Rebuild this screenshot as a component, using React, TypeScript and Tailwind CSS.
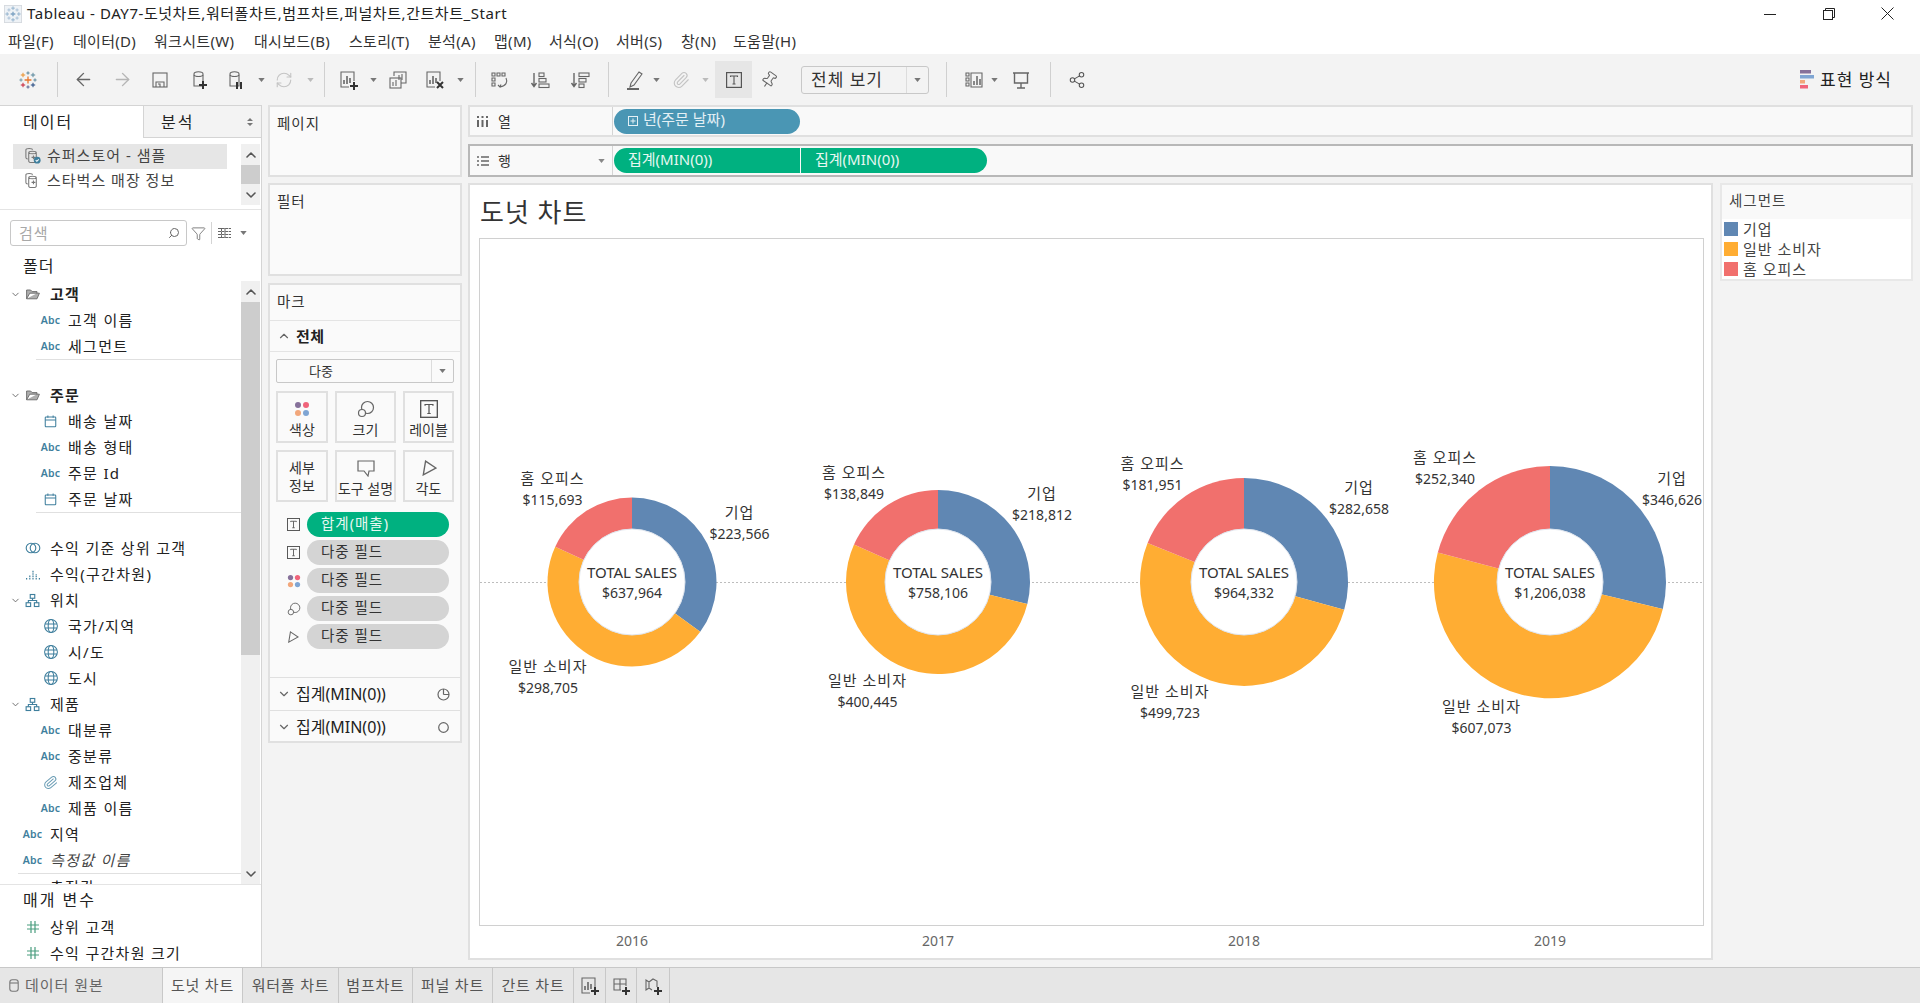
import React from "react";
import { ArrowLeft, ArrowRight, ChevronDown, ChevronUp, Share2, RefreshCw, Paperclip, Pin, Search, Funnel } from "lucide-react";

const C = { blue: "#6087b3", orange: "#ffad33", red: "#f1706d" };

function Svg({ s = 20, children, cls = "" }: { s?: number; children: React.ReactNode; cls?: string }) {
  return (
    <svg width={s} height={s} viewBox="0 0 20 20" fill="none" stroke="#666" strokeWidth="1.1" className={"shrink-0 " + cls}>
      {children}
    </svg>
  );
}
const Caret = () => <svg width="7" height="4" viewBox="0 0 8 5" className="shrink-0"><path d="M0 0h8L4 5z" fill="#777" /></svg>;
const Sep = ({ cls }: { cls: string }) => <div className={"w-px h-[35px] bg-[#d0d0d0] shrink-0 " + cls} />;
const Slot = ({ cls, children }: { cls: string; children: React.ReactNode }) => <div className={"flex items-center justify-center shrink-0 " + cls}>{children}</div>;

const Cross = ({ x, y, r, c, w = 1 }: { x: number; y: number; r: number; c: string; w?: number }) => (
  <path d={`M${x - r} ${y}H${x + r}M${x} ${y - r}V${y + r}`} stroke={c} strokeWidth={w} />
);
const Logo = ({ s = 20 }: { s?: number }) => (
  <svg width={s} height={s} viewBox="0 0 20 20" className="shrink-0">
    <Cross x={10} y={10} r={3.4} c="#e8762b" w={1.3} />
    <Cross x={10} y={3} r={1.6} c="#5b879b" />
    <Cross x={10} y={17} r={1.6} c="#5b6591" />
    <Cross x={3} y={10} r={1.6} c="#7099a6" />
    <Cross x={17} y={10} r={1.6} c="#5b879b" />
    <Cross x={5} y={5} r={2.2} c="#eb912b" />
    <Cross x={15} y={5} r={2.2} c="#59879b" />
    <Cross x={5} y={15} r={2.2} c="#c72037" />
    <Cross x={15} y={15} r={2.2} c="#1f457e" />
  </svg>
);
const AppIcon = () => (
  <svg width="18" height="18" viewBox="0 0 20 20" className="shrink-0">
    <rect x="0.5" y="0.5" width="19" height="19" fill="#eef2f6" stroke="#d5d9de" />
    <Cross x={10} y={10} r={2.6} c="#7fa4c4" w={1.5} />
    <Cross x={10} y={3.5} r={2} c="#8fb0cc" />
    <Cross x={10} y={16.5} r={2} c="#8fb0cc" />
    <Cross x={3.5} y={10} r={2} c="#8fb0cc" />
    <Cross x={16.5} y={10} r={2} c="#8fb0cc" />
    <Cross x={5.5} y={5.5} r={1.8} c="#a7c0d6" />
    <Cross x={14.5} y={5.5} r={1.8} c="#a7c0d6" />
    <Cross x={5.5} y={14.5} r={1.8} c="#a7c0d6" />
    <Cross x={14.5} y={14.5} r={1.8} c="#a7c0d6" />
  </svg>
);
const Plus = ({ x = 15, y = 16 }: { x?: number; y?: number }) => <path d={`M${x - 4} ${y}H${x + 4}M${x} ${y - 4}V${y + 4}`} stroke="#333" strokeWidth="2" />;
const Db = ({ extra }: { extra: React.ReactNode }) => (
  <Svg>
    <path d="M4 4c0-3 9-3 9 0v12H4z" />
    <path d="M4 5c1 2 8 2 9 0" />
    {extra}
  </Svg>
);
const Bars = ({ extra, box = true }: { extra?: React.ReactNode; box?: boolean }) => (
  <Svg>
    {box && <path d="M15 11V2H2v15h8" />}
    <path d="M5 14v-4M8 14V6M11 13V8" strokeWidth="1.6" />
    {extra}
  </Svg>
);
const TBox = ({ s = 16 }: { s?: number }) => (
  <svg width={s} height={s} viewBox="0 0 16 16" fill="none" className="shrink-0">
    <rect x=".6" y=".6" width="14.8" height="14.8" stroke="#555" strokeWidth="1.2" />
    <path d="M4.5 5V4h7v1M8 4v8M6.5 12h3" stroke="#555" strokeWidth="1.1" />
  </svg>
);
const Dots = ({ s = 16 }: { s?: number }) => (
  <svg width={s} height={s} viewBox="0 0 16 16" className="shrink-0">
    <circle cx="4" cy="4" r="3" fill="#86719a" />
    <circle cx="12" cy="4" r="3" fill="#f0647b" />
    <circle cx="4" cy="12" r="3" fill="#f2a77b" />
    <circle cx="12" cy="12" r="3" fill="#7fa5d3" />
  </svg>
);
const SizeI = ({ s = 18 }: { s?: number }) => (
  <svg width={s} height={s} viewBox="0 0 18 18" fill="none" stroke="#666" strokeWidth="1.2" className="shrink-0">
    <circle cx="10.5" cy="7.5" r="6" />
    <circle cx="5" cy="13" r="3.5" fill="#fafafa" />
  </svg>
);
const AngleI = ({ s = 14 }: { s?: number }) => (
  <svg width={s} height={s} viewBox="0 0 14 14" fill="none" stroke="#666" strokeWidth="1.2" className="shrink-0">
    <path d="M4 1l9 6-11 6z" />
  </svg>
);
const Abc = () => <span className="text-[10.5px] font-semibold text-[#3f7f9d] leading-none tracking-[0.2px]">Abc</span>;
const Cal = () => (
  <Svg s={15}><g stroke="#3f7f9d" strokeWidth="1.4"><rect x="3" y="4" width="14" height="13" rx="1" /><path d="M3 8h14M6.5 2v3M13.5 2v3" /></g></Svg>
);
const Globe = () => (
  <Svg s={16}><g stroke="#3f7f9d" strokeWidth="1.3"><circle cx="10" cy="10" r="8" /><ellipse cx="10" cy="10" rx="3.5" ry="8" /><path d="M2.5 7.5h15M2.5 12.5h15" /></g></Svg>
);
const Hier = () => (
  <Svg s={15}><g stroke="#3f7f9d" strokeWidth="1.5"><rect x="7" y="2" width="6" height="5" /><rect x="1.5" y="13" width="6" height="5" /><rect x="12.5" y="13" width="6" height="5" /><path d="M10 7v3M4.5 13v-3h11v3" /></g></Svg>
);
const Folder = () => (
  <Svg s={16}><path d="M2 16V5h5l2 2h6v2H6l-4 7h13l3-7h-3" fill="#8b8b8b" fillOpacity=".7" /></Svg>
);
const Sets = () => (
  <Svg s={16}><g stroke="#3f7f9d" strokeWidth="1.4"><circle cx="7.5" cy="10" r="6" /><circle cx="12.5" cy="10" r="6" /></g></Svg>
);
const Binned = () => (
  <Svg s={16}><path d="M2 17v-2M6 17v-5M10 17V5M14 17v-7M18 17v-2" stroke="#3f7f9d" strokeWidth="1.5" strokeDasharray="2 1" /></Svg>
);
const Clip = () => <Paperclip size={15} color="#6b9db5" strokeWidth={1.6} className="rotate-[5deg]" />;
const Hash = () => (
  <svg width="12" height="12" viewBox="0 0 12 12" stroke="#4a9d7f" strokeWidth="1.2" className="shrink-0"><path d="M0 4h12M0 8h12M4 0v12M8 0v12" /></svg>
);
const DsIcon = ({ check }: { check?: boolean }) => (
  <svg width="17" height="17" viewBox="0 0 18 18" fill="none" stroke="#777" strokeWidth="1.1" className="shrink-0">
    <path d="M2 3c0-2 7-2 7 0M2 3v8c0 1 1 1.5 2 1.6" />
    <path d="M5 6c0-2 8-2 8 0v9c0 2-8 2-8 0zM5 6c1 1.6 7 1.6 8 0M8 11h4M10 9v4" />
    {check && <circle cx="14" cy="14" r="3.6" fill="#3f7f9d" stroke="none" />}
    {check && <path d="M12.4 14l1.2 1.2 2-2.2" stroke="#fff" />}
  </svg>
);

function Toolbar() {
  return (
    <div className="h-[51px] bg-[#f3f3f3] flex items-center shrink-0 text-[#666]">
      <Slot cls="w-[55px]"><Logo s={20} /></Slot>
      <Sep cls="ml-[2px]" />
      <Slot cls="w-[50px]"><ArrowLeft size={21} color="#666" strokeWidth={1.6} /></Slot>
      <Slot cls="w-[28px]"><ArrowRight size={21} color="#b5b5b5" strokeWidth={1.6} /></Slot>
      <Slot cls="w-[48px]"><Svg><rect x="3" y="3" width="14" height="14" /><path d="M6 17v-5h8v5M8 14h2v3" /></Svg></Slot>
      <Slot cls="w-[32px]"><Db extra={<Plus x={13} y={15} />} /></Slot>
      <Slot cls="w-[40px]"><Db extra={<path d="M11 12v7M15 12v7" stroke="#333" strokeWidth="2" />} /></Slot>
      <Slot cls="w-[10px]"><Caret /></Slot>
      <Slot cls="w-[36px]"><RefreshCw size={18} color="#c4c4c4" strokeWidth={1.5} /></Slot>
      <Slot cls="w-[16px]"><svg width="7" height="4" viewBox="0 0 8 5" className="shrink-0"><path d="M0 0h8L4 5z" fill="#bbb" /></svg></Slot>
      <Sep cls="ml-[6px]" />
      <Slot cls="w-[38px] ml-[5px]"><Bars extra={<Plus />} /></Slot>
      <Slot cls="w-[10px]"><Caret /></Slot>
      <Slot cls="w-[40px]"><Svg><path d="M6 6V2h12v11h-5" /><rect x="2" y="8" width="11" height="10" /><path d="M11 10V5M14 10V4M5 16v-4M8 16v-6" /></Svg></Slot>
      <Slot cls="w-[34px]"><Bars extra={<path d="M12 12l6 6M18 12l-6 6" stroke="#333" strokeWidth="2" />} /></Slot>
      <Slot cls="w-[16px]"><Caret /></Slot>
      <Sep cls="ml-[7px]" />
      <Slot cls="w-[48px]"><Svg><path d="M2 3h3v3H2zM7 3h3v3H7zM12 3h3v3h-3zM2 8h3v3H2zM2 13h3v3H2z" /><path d="M16 8c2 4 0 8-6 9M8 15l2 2 1-2.5" /></Svg></Slot>
      <Slot cls="w-[32px]"><Svg><path d="M4 3v13M1.5 13L4 16.500 6.500 13" strokeWidth="1.4" /><rect x="9" y="3" width="5" height="3.500" /><rect x="9" y="8.500" width="7" height="3.500" /><rect x="9" y="14" width="10" height="3.500" /></Svg></Slot>
      <Slot cls="w-[48px]"><Svg><path d="M4 3v13M1.500 13L4 16.500 6.500 13" strokeWidth="1.4" /><rect x="9" y="3" width="10" height="3.500" /><rect x="9" y="8.500" width="7" height="3.500" /><rect x="9" y="14" width="5" height="3.500" /></Svg></Slot>
      <Sep cls="ml-[4px]" />
      <Slot cls="w-[30px] ml-[11px]"><Svg><path d="M6 13L14 2l3 2-8 11-4 2z" /><path d="M2 19h12" strokeWidth="2" /></Svg></Slot>
      <Slot cls="w-[12px]"><Caret /></Slot>
      <Slot cls="w-[38px]"><Paperclip size={18} color="#c4c4c4" strokeWidth={1.5} /></Slot>
      <Slot cls="w-[10px]"><svg width="7" height="4" viewBox="0 0 8 5" className="shrink-0"><path d="M0 0h8L4 5z" fill="#bbb" /></svg></Slot>
      <Slot cls="w-[37px] h-[37px] bg-[#e6e6e6] ml-[5px]"><TBox /></Slot>
      <Slot cls="w-[34px]"><Pin size={18} color="#666" strokeWidth={1.4} className="rotate-[35deg]" /></Slot>
      <div className="ml-[15px] w-[128px] h-[28px] border border-[#c8c8c8] rounded-[3px] flex items-center shrink-0">
        <span className="flex-1 pl-[9px] text-[17px] text-[#333] tracking-[1px] whitespace-nowrap">전체 보기</span>
        <div className="w-[22px] h-full border-l border-[#dcdcdc] flex items-center justify-center"><Caret /></div>
      </div>
      <Sep cls="ml-[17px]" />
      <Slot cls="w-[24px] ml-[15px]"><Svg><path d="M2 3h3v3H2zM2 8h3v3H2zM2 13h3v3H2zM7 3h11v14H7z" /><path d="M10 15v-4M13 15V6M16 15v-6" strokeWidth="1.5" /></Svg></Slot>
      <Slot cls="w-[16px]"><Caret /></Slot>
      <Slot cls="w-[38px]"><Svg><path d="M2 3h16M3.500 3v10h13V3M10 13v5M6 18h8" strokeWidth="1.4" /></Svg></Slot>
      <Sep cls="ml-[10px]" />
      <Slot cls="w-[52px]"><Share2 size={18} color="#555" strokeWidth={1.4} /></Slot>
      <div className="flex-1" />
      <div className="flex items-center mr-[28px] gap-[6px]">
        <svg width="14" height="19" viewBox="0 0 14 19" className="shrink-0"><rect width="11" height="3.500" fill="#86719a" /><rect y="5" width="14" height="3.500" fill="#7fa5d3" /><rect y="10" width="5" height="3.500" fill="#f2a77b" /><rect y="15" width="8" height="3.500" fill="#f0647b" /></svg>
        <span className="text-[17px] text-[#222] tracking-[1px]">표현 방식</span>
      </div>
    </div>
  );
}

const menu: [string, string][] = [
  ["파일(F)", "w-[65px]"], ["데이터(D)", "w-[81px]"], ["워크시트(W)", "w-[100px]"], ["대시보드(B)", "w-[95px]"], ["스토리(T)", "w-[79px]"],
  ["분석(A)", "w-[66px]"], ["맵(M)", "w-[55px]"], ["서식(O)", "w-[67px]"], ["서버(S)", "w-[65px]"], ["창(N)", "w-[52px]"], ["도움말(H)", "w-[80px]"],
];

function ScrollBtn({ up }: { up?: boolean }) {
  return (
    <div className="h-[21px] bg-[#f0f0f0] flex items-center justify-center shrink-0">
      {up ? <ChevronUp size={16} color="#555" strokeWidth={2.4} /> : <ChevronDown size={16} color="#555" strokeWidth={2.4} />}
    </div>
  );
}

function Row({ level, caret, icon, text, cls = "" }: { level: 0 | 1; caret?: boolean; icon: React.ReactNode; text: string; cls?: string }) {
  return (
    <div className={"h-[26px] flex items-center shrink-0 whitespace-nowrap text-[15px] tracking-[1.3px] text-[#222] " + (level === 0 ? "pl-[10px]" : "pl-[42px]")}>
      {level === 0 && <div className="w-[14px] shrink-0 flex">{caret && <ChevronDown size={11} color="#666" strokeWidth={2} />}</div>}
      <div className="w-[26px] shrink-0 flex items-center"><div className="w-[17px] flex justify-center">{icon}</div></div>
      <span className={cls}>{text}</span>
    </div>
  );
}

function LeftPanel() {
  return (
    <div className="w-[262px] shrink-0 bg-white border-t border-r border-[#d4d4d4] flex flex-col h-full">
      <div className="h-[32px] flex shrink-0 text-[16px] text-[#222] tracking-[2px]">
        <div className="w-[143px] pl-[23px] flex items-center">데이터</div>
        <div className="flex-1 bg-[#f3f3f3] border-l border-b border-[#d4d4d4] pl-[17px] flex items-center justify-between pr-[8px]">
          <span>분석</span>
          <svg width="6" height="8" viewBox="0 0 6 8"><path d="M0 3h6L3 0zM0 5h6L3 8z" fill="#777" /></svg>
        </div>
      </div>
      <div className="h-[72px] border-b border-[#e4e4e4] flex shrink-0 pt-[6px] text-[15px] tracking-[1px] text-[#444]">
        <div className="w-[241px]">
          <div className="ml-[13px] w-[214px] h-[25px] bg-[#e6e6e6] flex items-center pl-[11px] pb-[3px] gap-[6px] whitespace-nowrap"><DsIcon check />슈퍼스토어 - 샘플</div>
          <div className="ml-[13px] h-[25px] flex items-center pl-[11px] pb-[3px] gap-[6px] whitespace-nowrap"><DsIcon />스타벅스 매장 정보</div>
        </div>
        <div className="w-[19px]">
          <ScrollBtn up />
          <div className="h-[19px] bg-[#cdcdcd]" />
          <ScrollBtn />
        </div>
      </div>
      <div className="flex items-center h-[26px] mt-[10px] pl-[10px] shrink-0">
        <div className="w-[177px] h-[26px] border border-[#c8c8c8] rounded-[3px] flex items-center justify-between pl-[8px] pr-[6px] text-[15px] tracking-[1px] text-[#a8a8a8]">
          검색
          <Search size={12} color="#666" className="-scale-x-100" />
        </div>
        <Funnel size={15} color="#666" strokeWidth={1.3} className="ml-[4px]" />
        <div className="w-px h-[22px] bg-[#d4d4d4] ml-[5px]" />
        <svg width="13" height="10" viewBox="0 0 13 10" className="ml-[6px]"><path d="M0 .5h13M0 3.500h13M0 6.500h13M0 9.500h13M3.500 0v10M7 0v10" stroke="#666" strokeDasharray="3 .6" /></svg>
        <div className="ml-[9px]"><Caret /></div>
      </div>
      <div className="h-[35px] pl-[23px] flex items-center pt-[4px] text-[16px] text-[#222] tracking-[1px] shrink-0">폴더</div>
      <div className="h-[603px] flex shrink-0 overflow-hidden">
        <div className="w-[241px] overflow-hidden flex flex-col">
          <Row level={0} caret icon={<Folder />} text="고객" cls="font-semibold" />
          <Row level={1} icon={<Abc />} text="고객 이름" />
          <Row level={1} icon={<Abc />} text="세그먼트" />
          <div className="h-px bg-[#e0e0e0] ml-[36px] shrink-0" />
          <div className="h-[22px] shrink-0" />
          <Row level={0} caret icon={<Folder />} text="주문" cls="font-semibold" />
          <Row level={1} icon={<Cal />} text="배송 날짜" />
          <Row level={1} icon={<Abc />} text="배송 형태" />
          <Row level={1} icon={<Abc />} text="주문 Id" />
          <Row level={1} icon={<Cal />} text="주문 날짜" />
          <div className="h-px bg-[#e0e0e0] ml-[36px] shrink-0" />
          <div className="h-[22px] shrink-0" />
          <Row level={0} icon={<Sets />} text="수익 기준 상위 고객" />
          <Row level={0} icon={<Binned />} text="수익(구간차원)" />
          <Row level={0} caret icon={<Hier />} text="위치" />
          <Row level={1} icon={<Globe />} text="국가/지역" />
          <Row level={1} icon={<Globe />} text="시/도" />
          <Row level={1} icon={<Globe />} text="도시" />
          <Row level={0} caret icon={<Hier />} text="제품" />
          <Row level={1} icon={<Abc />} text="대분류" />
          <Row level={1} icon={<Abc />} text="중분류" />
          <Row level={1} icon={<Clip />} text="제조업체" />
          <Row level={1} icon={<Abc />} text="제품 이름" />
          <Row level={0} icon={<Abc />} text="지역" />
          <Row level={0} icon={<Abc />} text="측정값 이름" cls="italic text-[#444]" />
          <div className="h-px bg-[#e0e0e0] ml-[18px] shrink-0" />
          <Row level={0} icon={null} text="측정값" />
        </div>
        <div className="w-[19px] bg-[#f0f0f0] flex flex-col">
          <ScrollBtn up />
          <div className="h-[353px] bg-[#cdcdcd]" />
          <div className="flex-1" />
          <ScrollBtn />
        </div>
      </div>
      <div className="flex-1 border-t border-[#e4e4e4] flex flex-col">
        <div className="h-[29px] pl-[23px] flex items-center text-[16px] text-[#222] tracking-[2px] shrink-0">매개 변수</div>
        <Row level={0} icon={<Hash />} text="상위 고객" />
        <Row level={0} icon={<Hash />} text="수익 구간차원 크기" />
      </div>
    </div>
  );
}

function MarkBtn({ cls, icon, label }: { cls: string; icon?: React.ReactNode; label: React.ReactNode }) {
  return (
    <div className={"border-2 border-[#e0e0e0] flex flex-col items-center justify-center pt-[2px] text-[14px] text-[#333] leading-[18px] whitespace-nowrap text-center " + cls}>
      {icon && <div className="h-[24px] flex items-center">{icon}</div>}
      {label}
    </div>
  );
}
function Pill({ icon, text, on }: { icon: React.ReactNode; text: string; on?: boolean }) {
  return (
    <div className="flex items-center h-[25px] shrink-0">
      <div className="w-[37px] pl-[17px] flex justify-start shrink-0">{icon}</div>
      <div className={"w-[142px] h-[25px] rounded-full pl-[14px] text-[14.5px] tracking-[1px] leading-[22px] " + (on ? "bg-[#00b180] text-[#e6f7f1]" : "bg-[#d4d4d4] text-[#333]")}>{text}</div>
    </div>
  );
}
function MarksCard() {
  return (
    <div className="h-[460px] border-2 border-[#e0e0e0] bg-[#fafafa] flex flex-col shrink-0 -mx-0">
      <div className="h-[35px] pl-[7px] pb-[2px] flex items-center text-[14.5px] text-[#333] tracking-[1px] shrink-0">마크</div>
      <div className="h-[32px] border-y border-[#e4e4e4] flex items-center pl-[7px] gap-[5px] text-[15px] font-semibold text-[#222] tracking-[.5px] shrink-0">
        <ChevronUp size={14} color="#666" />전체
      </div>
      <div className="mt-[7px] ml-[6px] w-[178px] h-[24px] border border-[#c8c8c8] rounded-[2px] flex items-center shrink-0">
        <span className="flex-1 pl-[32px] pt-[1px] text-[13px] text-[#333]">다중</span>
        <div className="w-[22px] h-full border-l border-[#dcdcdc] flex items-center justify-center"><Caret /></div>
      </div>
      <div className="mt-[8px] ml-[6px] flex gap-[7px] h-[52px] shrink-0">
        <MarkBtn cls="w-[52px]" icon={<Dots />} label="색상" />
        <MarkBtn cls="w-[61px]" icon={<SizeI />} label="크기" />
        <MarkBtn cls="w-[51px]" icon={<TBox s={18} />} label="레이블" />
      </div>
      <div className="mt-[7px] ml-[6px] flex gap-[7px] h-[52px] shrink-0">
        <MarkBtn cls="w-[52px]" label={<>세부<br />정보</>} />
        <MarkBtn cls="w-[61px]" icon={<svg width="18" height="17" viewBox="0 0 18 17" fill="none" stroke="#666" strokeWidth="1.2"><path d="M1 1h16v10h-5l-1 5-4-5H1z" /></svg>} label="도구 설명" />
        <MarkBtn cls="w-[51px]" icon={<AngleI s={16} />} label="각도" />
      </div>
      <div className="mt-[10px] flex flex-col gap-[3px] shrink-0">
        <Pill on icon={<TBox s={13} />} text="합계(매출)" />
        <Pill icon={<TBox s={13} />} text="다중 필드" />
        <Pill icon={<Dots s={14} />} text="다중 필드" />
        <Pill icon={<SizeI s={14} />} text="다중 필드" />
        <Pill icon={<AngleI s={12} />} text="다중 필드" />
      </div>
      <div className="flex-1" />
      <div className="h-[33px] border-t border-[#e0e0e0] flex items-center pl-[7px] gap-[5px] text-[16px] text-[#222] shrink-0">
        <ChevronDown size={14} color="#666" /><span className="flex-1">집계(MIN(0))</span>
        <svg width="13" height="13" viewBox="0 0 13 13" fill="none" stroke="#666" strokeWidth="1.2" className="mr-[10px]"><circle cx="6.500" cy="6.500" r="5.500" /><path d="M6.500 6.500V1M6.500 6.500H12" /></svg>
      </div>
      <div className="h-[31px] border-t border-[#e0e0e0] flex items-center pl-[7px] pt-[2px] gap-[5px] text-[16px] text-[#222] shrink-0">
        <ChevronDown size={14} color="#666" /><span className="flex-1">집계(MIN(0))</span>
        <svg width="11" height="11" viewBox="0 0 11 11" fill="none" stroke="#666" strokeWidth="1.2" className="mr-[11px]"><circle cx="5.500" cy="5.500" r="4.800" /></svg>
      </div>
    </div>
  );
}

function ShelfLabel({ icon, text, caret }: { icon: React.ReactNode; text: string; caret?: boolean }) {
  return (
    <div className="w-[143px] h-full border-r border-[#d4d4d4] flex items-center pl-[7px] text-[14px] text-[#333] shrink-0 relative">
      <div className="w-[21px] shrink-0">{icon}</div>
      <span className="flex-1">{text}</span>
      {caret && <svg width="7" height="4" viewBox="0 0 8 5" className="mr-[7px]"><path d="M0 0h8L4 5z" fill="#888" /></svg>}
    </div>
  );
}

type Donut = { cx: number; r: number; total: string; vals: [number, number, number]; labels: [number, number, string][] };
const CY = 582;
const donuts: Donut[] = [
  { cx: 632, r: 84.5, total: "$637,964", vals: [223566, 298705, 115693], labels: [[739.5, 513, "기업|$223,566"], [548, 667, "일반 소비자|$298,705"], [552.5, 479, "홈 오피스|$115,693"]] },
  { cx: 938, r: 92, total: "$758,106", vals: [218812, 400445, 138849], labels: [[1042, 494, "기업|$218,812"], [867.5, 681, "일반 소비자|$400,445"], [854, 473, "홈 오피스|$138,849"]] },
  { cx: 1244, r: 104, total: "$964,332", vals: [282658, 499723, 181951], labels: [[1359, 488, "기업|$282,658"], [1170, 692, "일반 소비자|$499,723"], [1152.5, 464, "홈 오피스|$181,951"]] },
  { cx: 1550, r: 116, total: "$1,206,038", vals: [346626, 607073, 252340], labels: [[1672, 479, "기업|$346,626"], [1481.5, 707, "일반 소비자|$607,073"], [1445, 458, "홈 오피스|$252,340"]] },
];
const colors = [C.blue, C.orange, C.red];

function slices(d: Donut) {
  const sum = d.vals[0] + d.vals[1] + d.vals[2];
  let a = 0;
  return d.vals.map((v, i) => {
    const b = a + (v / sum) * Math.PI * 2;
    const p = (t: number) => `${(d.cx + d.r * Math.sin(t)).toFixed(2)} ${(CY - d.r * Math.cos(t)).toFixed(2)}`;
    const path = `M${d.cx} ${CY}L${p(a)}A${d.r} ${d.r} 0 ${b - a > Math.PI ? 1 : 0} 1 ${p(b)}Z`;
    a = b;
    return <path key={i} d={path} fill={colors[i]} />;
  });
}

function Chart() {
  return (
    <svg width="1223" height="686" viewBox="480 239 1223 686" className="block">
      <line x1="480" x2="1703" y1={CY + 0.5} y2={CY + 0.5} stroke="#bdbdbd" strokeDasharray="2 2" />
      {donuts.map((d) => (
        <g key={d.cx}>
          {slices(d)}
          <circle cx={d.cx} cy={CY} r="53" fill="#fff" stroke="#dfe5ee" strokeWidth="1" />
          <g textAnchor="middle" fontSize="14" fill="#333">
            <text x={d.cx} y={578} fontSize="15">TOTAL SALES</text>
            <text x={d.cx} y={598}>{d.total}</text>
            {d.labels.map(([x, y, t]) => {
              const [a, b] = t.split("|");
              return (
                <g key={t}>
                  <text x={x} y={y + 5} fontSize="15" letterSpacing="1">{a}</text>
                  <text x={x} y={y + 26}>{b}</text>
                </g>
              );
            })}
          </g>
        </g>
      ))}
    </svg>
  );
}

function Sheet() {
  return (
    <div className="w-[1245px] h-full bg-white border-2 border-[#e0e0e0] flex flex-col shrink-0">
      <div className="h-[53px] pl-[10px] pt-[8px] text-[26px] leading-[38px] text-[#333] tracking-[1px] shrink-0">도넛 차트</div>
      <div className="ml-[9px] w-[1225px] h-[688px] border border-[#d0d0d0] shrink-0"><Chart /></div>
      <div className="ml-[9px] w-[1224px] grid grid-cols-4 text-center text-[14px] text-[#666] pt-[4px]">
        <div>2016</div><div>2017</div><div>2018</div><div>2019</div>
      </div>
    </div>
  );
}

function Legend() {
  const items: [string, string][] = [["기업", "bg-[#6087b3]"], ["일반 소비자", "bg-[#ffad33]"], ["홈 오피스", "bg-[#f1706d]"]];
  return (
    <div className="w-[193px] h-[98px] border-2 border-[#e8e8e8] bg-white shrink-0">
      <div className="h-[34px] bg-[#f9f9f9] pl-[7px] pb-[2px] flex items-center text-[14.5px] text-[#444] tracking-[1px]">세그먼트</div>
      <div className="pl-[2px] flex flex-col">
        {items.map(([t, c]) => (
          <div key={t} className="h-[20px] flex items-center gap-[5px] text-[15px] text-[#444] tracking-[1px] whitespace-nowrap">
            <div className={"w-[14px] h-[14px] " + c} />{t}
          </div>
        ))}
      </div>
    </div>
  );
}

const Tab = ({ cls, t }: { cls: string; t: string }) => (
  <div className={"h-full border-r border-[#c8c8c8] flex items-center justify-center text-[15px] text-[#555] tracking-[.8px] whitespace-nowrap shrink-0 " + cls}>{t}</div>
);

export default function App() {
  return (
    <div className="w-[1920px] h-[1003px] overflow-hidden flex flex-col bg-[#f3f3f3] [font-family:'Noto_Sans','Noto_Sans_CJK_KR',sans-serif]">
      <div className="h-[27px] bg-white flex items-center pl-[4px] shrink-0">
        <AppIcon />
        <span className="ml-[5px] text-[15px] tracking-[.55px] text-[#222] whitespace-nowrap">Tableau - DAY7-도넛차트,워터폴차트,범프차트,퍼널차트,간트차트_Start</span>
        <div className="flex-1" />
        <div className="flex pr-[3px]">
          <Slot cls="w-[59px]"><svg width="12" height="12" viewBox="0 0 12 12" stroke="#222"><path d="M0 6.500h12" /></svg></Slot>
          <Slot cls="w-[59px]"><svg width="12" height="12" viewBox="0 0 12 12" fill="none" stroke="#222"><rect x=".5" y="2.500" width="9" height="9" /><path d="M2.500 2.500v-2h9v9h-2" /></svg></Slot>
          <Slot cls="w-[59px]"><svg width="13" height="13" viewBox="0 0 13 13" stroke="#222"><path d="M.5.5l12 12M12.500.5l-12 12" /></svg></Slot>
        </div>
      </div>
      <div className="h-[27px] bg-white flex items-center pl-[8px] pt-[1px] text-[15px] tracking-[.3px] text-[#333] shrink-0">
        {menu.map(([t, w]) => <div key={t} className={"whitespace-nowrap shrink-0 " + w}>{t}</div>)}
      </div>
      <Toolbar />
      <div className="flex-1 flex min-h-0">
        <LeftPanel />
        <div className="w-[194px] ml-[6px] flex flex-col shrink-0">
          <div className="h-[72px] border-2 border-[#e0e0e0] bg-[#fafafa] pl-[7px] pt-[6px] text-[14.5px] text-[#333] tracking-[1px] shrink-0">페이지</div>
          <div className="h-[93px] mt-[6px] mb-[7px] border-2 border-[#e0e0e0] bg-[#fafafa] pl-[7px] pt-[6px] text-[14.5px] text-[#333] tracking-[1px] shrink-0">필터</div>
          <MarksCard />
        </div>
        <div className="flex-1 ml-[6px] mr-[7px] flex flex-col min-w-0">
          <div className="h-[32px] border-2 border-[#e0e0e0] bg-[#f9f9f9] flex items-center shrink-0">
            <ShelfLabel text="열" icon={<svg width="11" height="11" viewBox="0 0 11 11" stroke="#666" strokeWidth="2"><path d="M1 0v2M1 4v7M5.500 0v2M5.500 4v7M10 0v2M10 4v7" /></svg>} />
            <div className="ml-[1px] w-[186px] h-[25px] rounded-full bg-[#4a96b4] text-[#e4f0f5] text-[15px] flex items-center pl-[14px] pb-[3px] gap-[5px] whitespace-nowrap">
              <svg width="10" height="10" viewBox="0 0 10 10" fill="none" stroke="#e4f0f5" className="mt-[3px]"><rect x=".5" y=".5" width="9" height="9" /><path d="M5 2.500v5M2.500 5h5" /></svg>
              년(주문 날짜)
            </div>
          </div>
          <div className="h-[33px] mt-[7px] border-2 border-[#b8b8b8] bg-[#f9f9f9] flex items-center shrink-0">
            <ShelfLabel text="행" caret icon={<svg width="12" height="10" viewBox="0 0 12 10" stroke="#666" strokeWidth="1.600"><path d="M0 1h2M4 1h8M0 5h2M4 5h8M0 9h2M4 9h8" /></svg>} />
            <div className="ml-[1px] w-[186px] h-[25px] rounded-l-full bg-[#00b180] text-[#e6f7f1] text-[15px] flex items-center pl-[14px] pb-[3px]">집계(MIN(0))</div>
            <div className="ml-[1px] w-[186px] h-[25px] rounded-r-full bg-[#00b180] text-[#e6f7f1] text-[15px] flex items-center pl-[14px] pb-[3px]">집계(MIN(0))</div>
          </div>
          <div className="h-[777px] mt-[6px] flex gap-[7px] shrink-0">
            <Sheet />
            <Legend />
          </div>
        </div>
      </div>
      <div className="h-[36px] bg-[#e6e6e6] border-t border-[#c8c8c8] flex shrink-0">
        <div className="w-[163px] h-full border-r border-[#c8c8c8] flex items-center pl-[9px] gap-[6px] text-[15px] text-[#666] tracking-[1px] shrink-0 whitespace-nowrap">
          <svg width="10" height="13" viewBox="0 0 10 13" fill="none" stroke="#777" strokeWidth="1.100"><rect x=".8" y=".8" width="8.400" height="11.400" rx="2.500" /><path d="M1 4h8" /></svg>
          데이터 원본
        </div>
        <Tab cls="w-[80px] bg-[#f5f5f5]" t="도넛 차트" />
        <Tab cls="w-[96px]" t="워터폴 차트" />
        <Tab cls="w-[74px]" t="범프차트" />
        <Tab cls="w-[80px]" t="퍼널 차트" />
        <Tab cls="w-[81px]" t="간트 차트" />
        <div className="w-[32px] h-full border-r border-[#c8c8c8] flex items-center justify-center shrink-0"><Bars extra={<Plus x={15} y={15} />} /></div>
        <div className="w-[31px] h-full border-r border-[#c8c8c8] flex items-center justify-center shrink-0"><Svg><path d="M10 14H3V3h12v7M3 8h12M9 3v11" /><Plus x={15} y={15} /></Svg></div>
        <div className="w-[33px] h-full border-r border-[#c8c8c8] flex items-center justify-center shrink-0"><Svg><path d="M9 14l-3-2-3 2V4l3 2 4-3 4 2v6M6 6v6" /><Plus x={15} y={15} /></Svg></div>
      </div>
    </div>
  );
}
